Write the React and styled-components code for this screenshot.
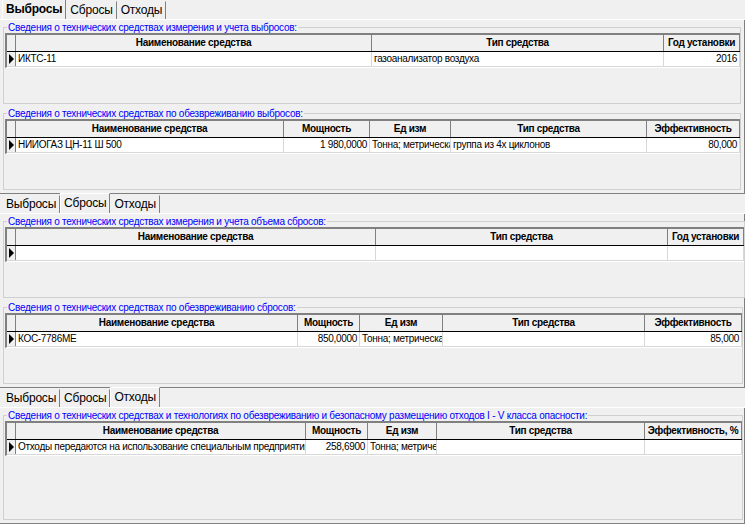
import React from "react";
import styled, { createGlobalStyle } from "styled-components";

const Global = createGlobalStyle`
  body { margin: 0; background: #f0f0f0; font-family: "Liberation Sans", Arial, sans-serif; font-size: 11px; color: #000; }
`;

const Page = styled.div`
  width: 745px;
  height: 524px;
  overflow: hidden;
  display: flex;
  flex-direction: column;
`;

const Section = styled.div`
  display: flex;
  flex-direction: column;
  height: ${(p) => p.h}px;
`;

const TabStrip = styled.div`
  display: flex;
  align-items: flex-end;
  height: 19px;
  padding-left: 2px;
  border-bottom: 1px solid #fff;
`;

const Tab = styled.div`
  padding: 0 3px;
  height: ${(p) => (p.active ? 19 : 17)}px;
  line-height: ${(p) => (p.active ? 19 : 17)}px;
  font-size: 12px;
  letter-spacing: -0.2px;
  font-weight: ${(p) => (p.bold ? "bold" : "normal")};
  border-right: 1px solid #808080;
  border-left: 1px solid ${(p) => (p.active ? "#fff" : "transparent")};
  border-top: 1px solid ${(p) => (p.active ? "#fff" : "transparent")};
`;

const Body = styled.div`
  flex: 1;
  display: flex;
  flex-direction: column;
  gap: 4px;
  padding: 2px 4px 3px 3px;
  border-right: 1px solid #808080;
  border-bottom: 1px solid #808080;
  min-height: 0;
`;

const Group = styled.fieldset`
  flex: 1;
  margin: 0;
  padding: 0 0 0 1px;
  border: 1px solid #d0d0d0;
  display: flex;
  flex-direction: column;
  min-height: 0;
  & > legend {
    color: #0000ff;
    font-size: 10px;
    letter-spacing: -0.25px;
    padding: 0 1px;
    margin-left: 2px;
  }
`;

const Grid = styled.div`
  flex: 1;
  background: #fff;
  border-top: 2px solid #808080;
  border-left: 2px solid #808080;
  border-bottom: 1px solid #fff;
  overflow: hidden;
`;

const Row = styled.div`
  display: flex;
  height: ${(p) => (p.head ? 16 : 14)}px;
  border-bottom: 1px solid ${(p) => (p.head ? "#000" : "#d8d8d8")};
  background: ${(p) => (p.head ? "#f0f0f0" : "#fff")};
`;

const Cell = styled.div`
  width: ${(p) => p.w}px;
  flex: none;
  box-sizing: border-box;
  padding: 0 2px;
  border-right: 1px solid ${(p) => (p.head ? "#808080" : "#d8d8d8")};
  font-weight: ${(p) => (p.head ? "bold" : "normal")};
  text-align: ${(p) => (p.head ? "center" : p.right ? "right" : "left")};
  line-height: ${(p) => (p.head ? 16 : 14)}px;
  font-size: 10px;
  letter-spacing: -0.3px;
  white-space: nowrap;
  overflow: hidden;
`;

const Indicator = styled.div`
  width: 8px;
  flex: none;
  background: #f0f0f0;
  border-right: 1px solid #808080;
  display: flex;
  align-items: center;
  justify-content: center;
  &::after {
    content: "";
    display: ${(p) => (p.mark ? "block" : "none")};
    border-left: 5px solid #000;
    border-top: 5px solid transparent;
    border-bottom: 5px solid transparent;
  }
`;

function Table({ cols, rows }) {
  return (
    <Grid>
      <Row head>
        <Indicator />
        {cols.map((c) => (
          <Cell head key={c.t} w={c.w}>{c.t}</Cell>
        ))}
      </Row>
      {rows.map((r, i) => (
        <Row key={i}>
          <Indicator mark={i === 0} />
          {cols.map((c, j) => (
            <Cell key={j} w={c.w} right={c.r}>{r[j]}</Cell>
          ))}
        </Row>
      ))}
    </Grid>
  );
}

const tabs = ["Выбросы", "Сбросы", "Отходы"];

function Tabs({ active, bold }) {
  return (
    <TabStrip>
      {tabs.map((t, i) => (
        <Tab key={t} active={i === active} bold={bold && i === active}>{t}</Tab>
      ))}
    </TabStrip>
  );
}

export default function App() {
  return (
    <Page>
      <Global />
      <Section h={194}>
        <Tabs active={0} bold />
        <Body>
          <Group>
            <legend>Сведения о технических средствах измерения и учета выбросов:</legend>
            <Table
              cols={[
                { t: "Наименование средства", w: 356 },
                { t: "Тип средства", w: 292 },
                { t: "Год установки", w: 76, r: true },
              ]}
              rows={[["ИКТС-11", "газоанализатор воздуха", "2016"]]}
            />
          </Group>
          <Group>
            <legend>Сведения о технических средствах по обезвреживанию выбросов:</legend>
            <Table
              cols={[
                { t: "Наименование средства", w: 268 },
                { t: "Мощность", w: 86, r: true },
                { t: "Ед изм", w: 81 },
                { t: "Тип средства", w: 196 },
                { t: "Эффективность", w: 93, r: true },
              ]}
              rows={[["НИИОГАЗ ЦН-11 Ш 500", "1 980,0000", "Тонна; метрическая", "группа из 4х циклонов", "80,000"]]}
            />
          </Group>
        </Body>
      </Section>
      <Section h={194}>
        <Tabs active={1} />
        <Body>
          <Group>
            <legend>Сведения о технических средствах измерения и учета объема сбросов:</legend>
            <Table
              cols={[
                { t: "Наименование средства", w: 360 },
                { t: "Тип средства", w: 292 },
                { t: "Год установки", w: 76, r: true },
              ]}
              rows={[["", "", ""]]}
            />
          </Group>
          <Group>
            <legend>Сведения о технических средствах по обезвреживанию сбросов:</legend>
            <Table
              cols={[
                { t: "Наименование средства", w: 282 },
                { t: "Мощность", w: 62, r: true },
                { t: "Ед изм", w: 83 },
                { t: "Тип средства", w: 202 },
                { t: "Эффективность", w: 97, r: true },
              ]}
              rows={[["КОС-7786МЕ", "850,0000", "Тонна; метрическая", "", "85,000"]]}
            />
          </Group>
        </Body>
      </Section>
      <Section h={136}>
        <Tabs active={2} />
        <Body>
          <Group>
            <legend>Сведения о технических средствах и технологиях по обезвреживанию и безопасному размещению отходов I - V класса опасности:</legend>
            <Table
              cols={[
                { t: "Наименование средства", w: 290 },
                { t: "Мощность", w: 62, r: true },
                { t: "Ед изм", w: 69 },
                { t: "Тип средства", w: 208 },
                { t: "Эффективность, %", w: 97, r: true },
              ]}
              rows={[["Отходы передаются на использование специальным предприятиям.", "258,6900", "Тонна; метрическая", "", ""]]}
            />
          </Group>
        </Body>
      </Section>
    </Page>
  );
}
